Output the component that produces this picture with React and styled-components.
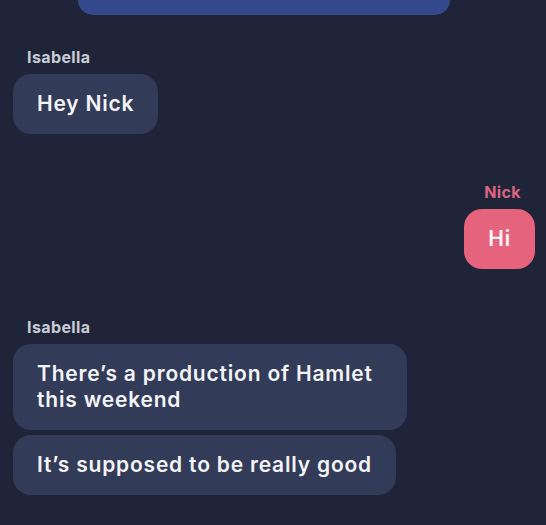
import styled, { createGlobalStyle } from "styled-components";

const GlobalStyle = createGlobalStyle`
  html, body {
    margin: 0;
    padding: 0;
    background-color: #1f2439;
  }

  body {
    font-family: "Inter", "Noto Sans", sans-serif;
    -webkit-font-smoothing: antialiased;
  }
`

const Thread = styled.main`
  width: 546px;
  height: 525px;
  overflow: hidden;
  background-color: #1f2439;
  display: flex;
  flex-direction: column;
  padding: 0 11px 0 13px;
  box-sizing: border-box;
`

const PreviousTail = styled.div`
  align-self: flex-start;
  margin-left: 65px;
  width: 372px;
  height: 15px;
  background-color: #34498b;
  border-radius: 0 0 16px 16px;
`

const Group = styled.section`
  display: flex;
  flex-direction: column;
  align-items: ${props => props.mine ? "flex-end" : "flex-start"};
  gap: 5px;
  margin-top: ${props => props.first ? "33px" : "49px"};
`

const Sender = styled.span`
  font-size: 16px;
  line-height: 18px;
  font-weight: 700;
  letter-spacing: 0.4px;
  color: ${props => props.mine ? "#de6580" : "#c9ccd6"};
  padding: 0 14px;
  margin-bottom: 3px;
`

const Bubble = styled.p`
  margin: 0;
  max-width: 346px;
  padding: 17px 24px;
  border-radius: 18px;
  font-size: 21px;
  line-height: 26px;
  font-weight: 600;
  letter-spacing: 0.8px;
  color: #f4f4f7;
  background-color: ${props => props.mine ? "#e5637c" : "#323b57"};
`

const messages = [
  { sender: "Isabella", texts: ["Hey Nick"] },
  { sender: "Nick", mine: true, texts: ["Hi"] },
  {
    sender: "Isabella",
    texts: ["There’s a production of Hamlet this weekend", "It’s supposed to be really good"]
  }
]

export default function App() {
  return (
    <>
      <GlobalStyle />
      <Thread>
        <PreviousTail />

        {messages.map((group, i) => (
          <Group key={i} mine={group.mine} first={i === 0}>
            <Sender mine={group.mine}>{group.sender}</Sender>
            {group.texts.map((text, j) => (
              <Bubble key={j} mine={group.mine}>{text}</Bubble>
            ))}
          </Group>
        ))}
      </Thread>
    </>
  );
}
